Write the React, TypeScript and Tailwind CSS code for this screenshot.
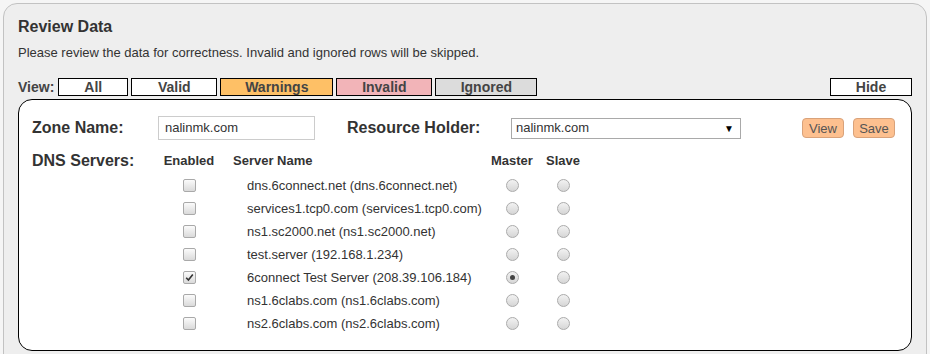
/**
 * Review Data panel: view filter bar + zone/DNS server editor.
 */

const servers = [
  { name: "dns.6connect.net (dns.6connect.net)", enabled: false, master: false },
  { name: "services1.tcp0.com (services1.tcp0.com)", enabled: false, master: false },
  { name: "ns1.sc2000.net (ns1.sc2000.net)", enabled: false, master: false },
  { name: "test.server (192.168.1.234)", enabled: false, master: false },
  { name: "6connect Test Server (208.39.106.184)", enabled: true, master: true },
  { name: "ns1.6clabs.com (ns1.6clabs.com)", enabled: false, master: false },
  { name: "ns2.6clabs.com (ns2.6clabs.com)", enabled: false, master: false },
];

const views = [
  { label: "All", cls: "w-[70px] bg-white" },
  { label: "Valid", cls: "w-[86px] bg-white" },
  { label: "Warnings", cls: "w-[113px] bg-[#fec066]" },
  { label: "Invalid", cls: "w-[96px] bg-[#f2b4b8]" },
  { label: "Ignored", cls: "w-[102px] bg-[#dcdcdc]" },
];

function Checkbox({ checked }: { checked: boolean }) {
  return (
    <span className="flex h-[13px] w-[13px] items-center justify-center rounded-[2px] border border-[#a9a9a9] bg-gradient-to-b from-[#fbfbfb] to-[#dadada]">
      {checked && (
        <svg width="9" height="9" viewBox="0 0 9 9">
          <path d="M1.2 4.8 L3.4 7 L7.8 1.4" fill="none" stroke="#333" strokeWidth="1.6" />
        </svg>
      )}
    </span>
  );
}

function Radio({ checked }: { checked: boolean }) {
  return (
    <span className="flex h-[13px] w-[13px] items-center justify-center rounded-full border border-[#ababab] bg-gradient-to-b from-[#f2f2f2] to-[#d6d6d6]">
      {checked && <span className="h-[5px] w-[5px] rounded-full bg-[#444]" />}
    </span>
  );
}

export default function App() {
  return (
    <div className="h-[354px] w-[930px] overflow-hidden bg-[#f5f5f5] pl-[3px] pr-[3px] pt-[3px] font-['Liberation_Sans',Arial,sans-serif] text-[#333]">
      <div className="h-[370px] rounded-t-[14px] border border-[#c2c2c2] bg-[#eeeeee] pl-[14px] pr-[14px] pt-[13px]">
        <h2 className="h-[20px] text-[16px] font-bold leading-[20px]">Review Data</h2>
        <p className="mt-[8px] h-[16px] text-[13px] leading-[16px]">
          Please review the data for correctness. Invalid and ignored rows will be skipped.
        </p>

        {/* view filter */}
        <div className="mt-[17px] flex h-[18px] items-center text-[14px] font-bold text-[#444]">
          <span className="mr-[4px]">View:</span>
          <div className="flex gap-[3px]">
            {views.map((v) => (
              <span
                key={v.label}
                className={`flex h-[18px] items-center justify-center border border-black leading-none ${v.cls}`}
              >
                {v.label}
              </span>
            ))}
          </div>
          <span className="ml-auto flex h-[18px] w-[82px] items-center justify-center border border-black bg-white leading-none">
            Hide
          </span>
        </div>

        {/* zone editor */}
        <div className="mt-[3px] h-[252px] rounded-[14px] border border-black bg-white pl-[13px] pt-[16px]">
          <div className="flex h-[24px] items-center">
            <span className="w-[126px] text-[16px] font-bold">Zone Name:</span>
            <div className="flex h-[24px] w-[157px] items-center border border-[#cccccc] px-[6px] text-[13px]">
              nalinmk.com
            </div>
            <span className="ml-[32px] w-[164px] text-[16px] font-bold">Resource Holder:</span>
            <div className="flex h-[21px] w-[230px] items-center justify-between border border-[#a9a9a9] pl-[4px] pr-[6px] text-[13px]">
              <span>nalinmk.com</span>
              <span className="text-[10px] text-black">▼</span>
            </div>
            <button className="ml-[61px] h-[20px] w-[42px] rounded-[4px] border border-[#d9a27a] bg-[#fdc08f] text-[13px] text-[#555]">
              View
            </button>
            <button className="ml-[9px] h-[20px] w-[42px] rounded-[4px] border border-[#d9a27a] bg-[#fdc08f] text-[13px] text-[#555]">
              Save
            </button>
          </div>

          <div className="mt-[9px] flex h-[24px] items-center text-[13px] font-bold">
            <span className="w-[131px] text-[16px]">DNS Servers:</span>
            <span className="w-[52px] text-center">Enabled</span>
            <span className="ml-[18px] w-[258px]">Server Name</span>
            <span className="w-[55px]">Master</span>
            <span>Slave</span>
          </div>

          <div className="mt-[1px]">
            {servers.map((s) => (
              <div key={s.name} className="flex h-[23px] items-center text-[13px]">
                <span className="ml-[131px] flex w-[52px] justify-center">
                  <Checkbox checked={s.enabled} />
                </span>
                <span className="ml-[18px] w-[258px] pl-[14px]">{s.name}</span>
                <span className="flex w-[43px] justify-center">
                  <Radio checked={s.master} />
                </span>
                <span className="ml-[8px] flex w-[43px] justify-center">
                  <Radio checked={false} />
                </span>
              </div>
            ))}
          </div>
        </div>
      </div>
    </div>
  );
}
